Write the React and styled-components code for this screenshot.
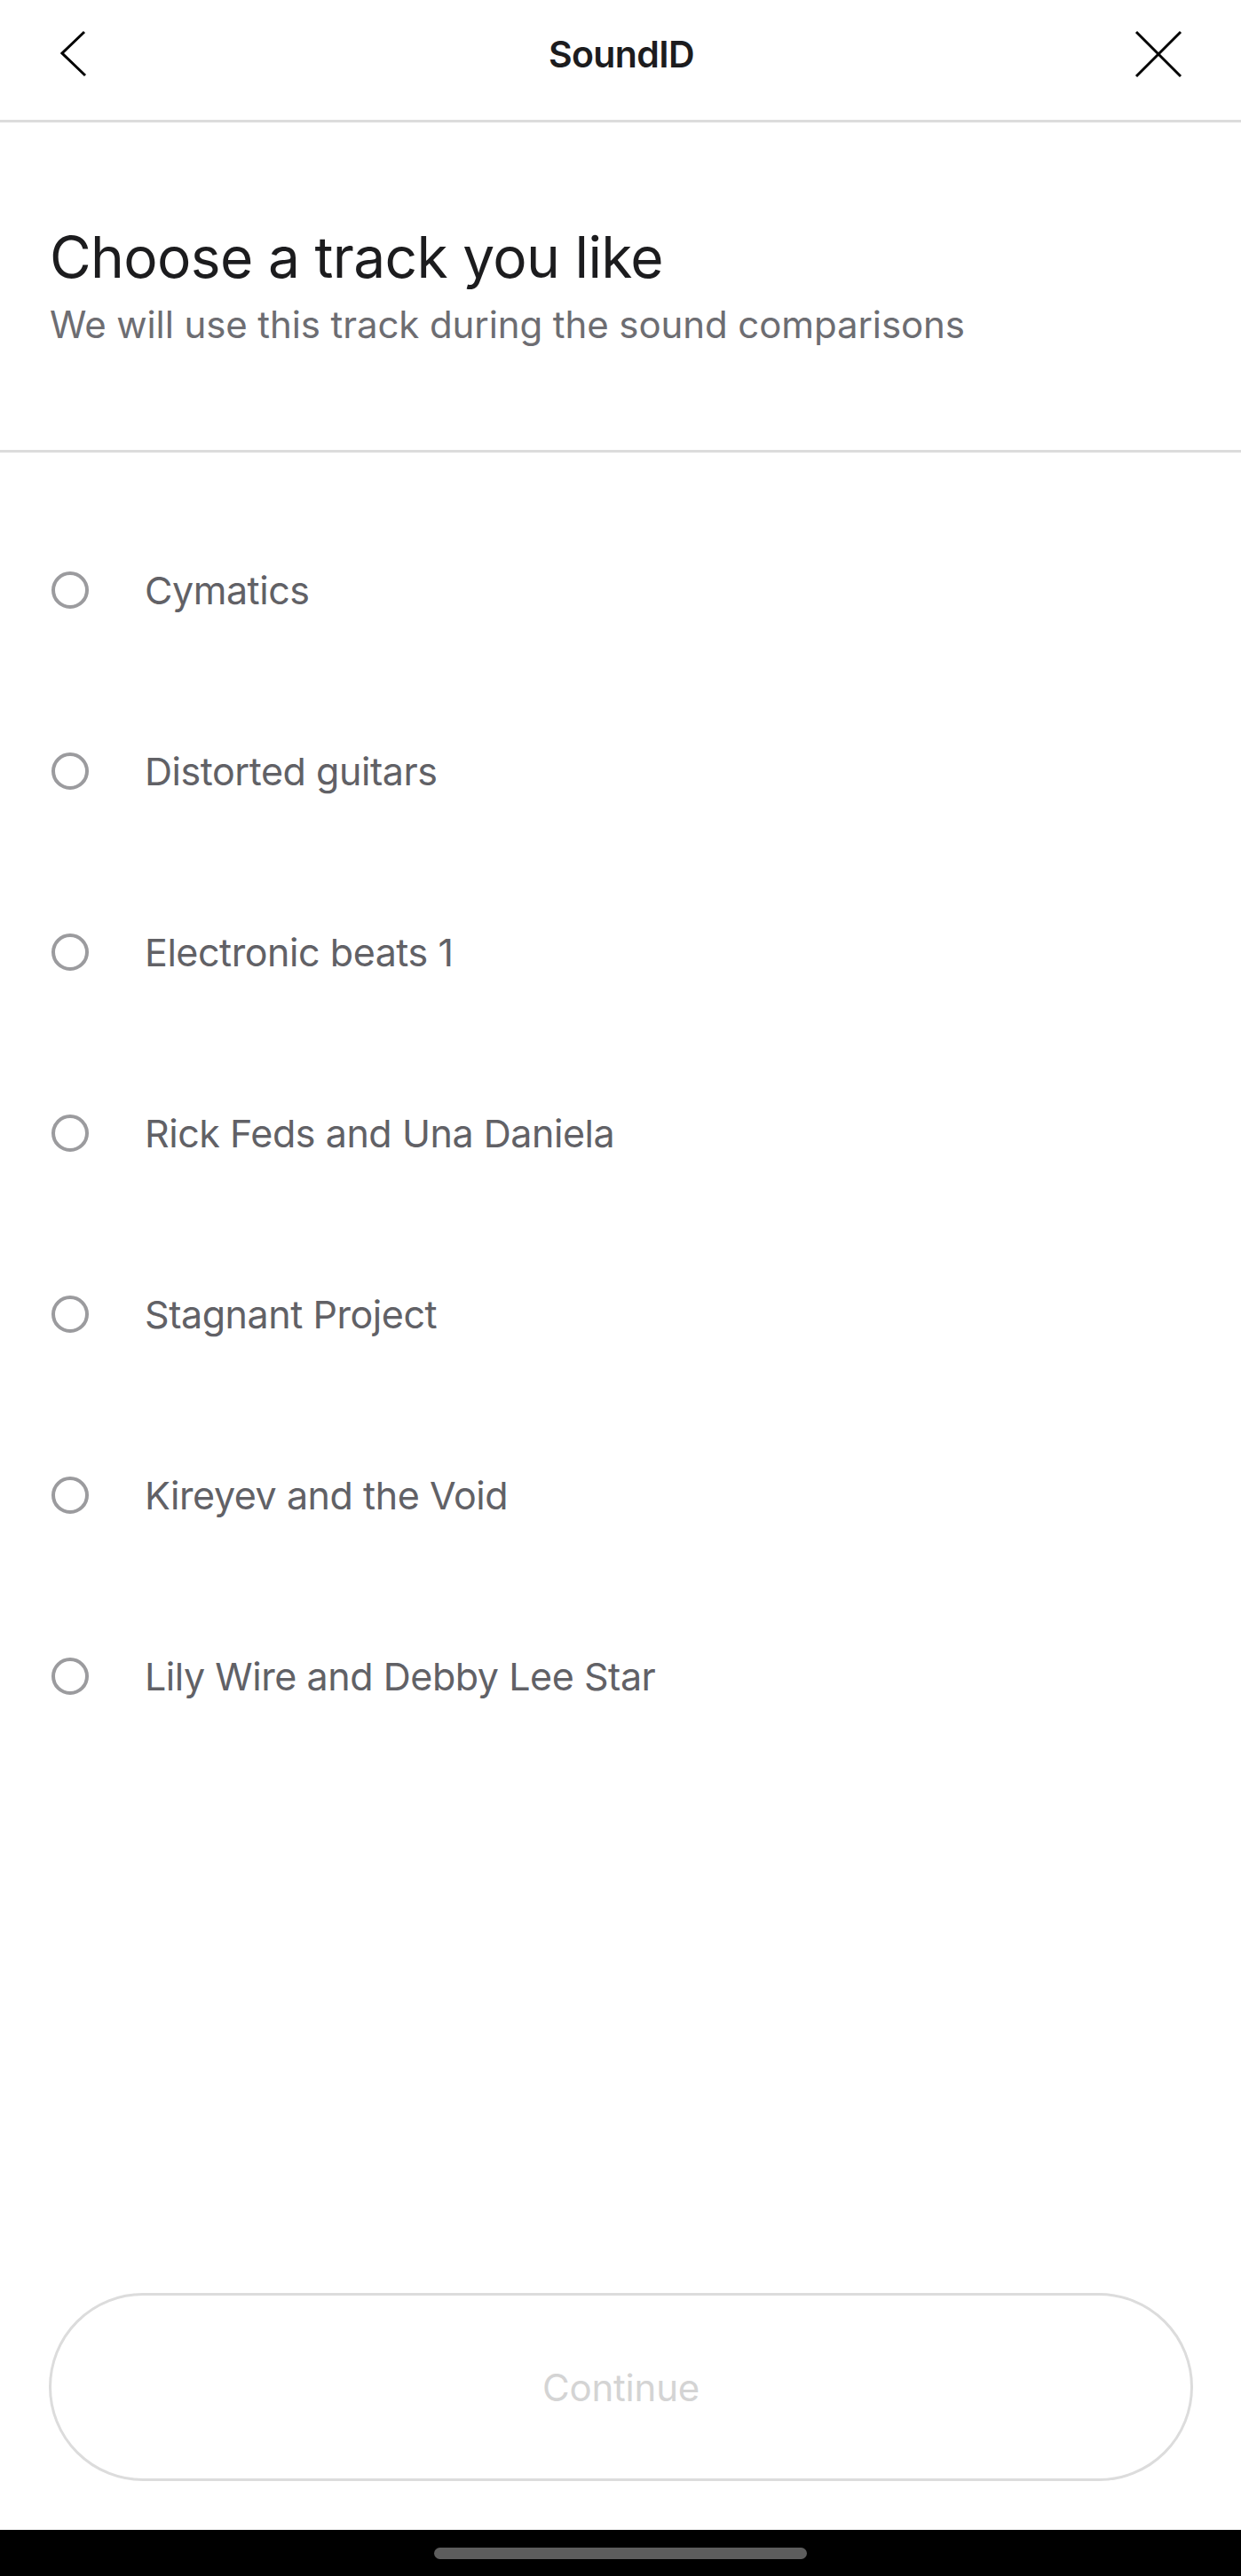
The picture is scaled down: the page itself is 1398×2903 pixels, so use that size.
import React, { useState } from 'react';
import styled, { createGlobalStyle } from 'styled-components';

const GlobalStyles = createGlobalStyle`
  html, body {
    margin: 0;
    padding: 0;
    background: #ffffff;
  }
  body {
    font-family: Inter, "Noto Sans", "Liberation Sans", sans-serif;
    -webkit-font-smoothing: antialiased;
  }
  * {
    box-sizing: border-box;
  }
`;

const Screen = styled.div`
  display: flex;
  flex-direction: column;
  width: 100%;
  height: 100vh;
  background: #ffffff;
`;

const TopBar = styled.header`
  display: flex;
  align-items: center;
  justify-content: space-between;
  height: 138px;
  padding: 0 66px 13px 68px;
  border-bottom: 3px solid #dcdcdc;
`;

const IconButton = styled.button`
  display: flex;
  align-items: center;
  justify-content: ${props => (props.align === 'left' ? 'flex-start' : 'flex-end')};
  width: 54px;
  height: 54px;
  padding: 0;
  border: none;
  background: none;
  cursor: pointer;
`;

const BarTitle = styled.div`
  font-size: 41px;
  font-weight: 600;
  letter-spacing: -0.6px;
  color: #1c1c1e;
`;

const Intro = styled.section`
  padding: 113px 56px 116px;
  border-bottom: 3px solid #dcdcdc;
`;

const Heading = styled.h1`
  margin: 0;
  font-size: 64px;
  line-height: 77px;
  font-weight: 400;
  letter-spacing: -0.65px;
  color: #1c1c1e;
`;

const Subheading = styled.p`
  margin: 13px 0 0;
  font-size: 42px;
  line-height: 50px;
  font-weight: 400;
  letter-spacing: -0.1px;
  color: #6d6d72;
`;

const TrackList = styled.ul`
  list-style: none;
  margin: 0;
  padding: 53px 0 0;
`;

const TrackRow = styled.li`
  display: flex;
  align-items: center;
  gap: 63px;
  height: 204px;
  padding-left: 58px;
  cursor: pointer;
`;

const Radio = styled.span`
  flex: none;
  width: 42px;
  height: 42px;
  border-radius: 50%;
  border: 4px solid ${props => (props.checked ? '#1c1c1e' : '#9b9b9e')};
  background: ${props => (props.checked ? 'radial-gradient(circle, #1c1c1e 45%, transparent 48%)' : 'transparent')};
`;

const TrackName = styled.span`
  font-size: 43px;
  font-weight: 400;
  letter-spacing: -0.45px;
  color: #616166;
`;

const Spacer = styled.div`
  flex: 1;
`;

const ContinueButton = styled.button`
  display: flex;
  align-items: center;
  justify-content: center;
  height: 212px;
  margin: 0 54px 55px 55px;
  border: 3px solid #dcdcdc;
  border-radius: 106px;
  background: #ffffff;
  font-family: inherit;
  font-size: 42px;
  font-weight: 400;
  letter-spacing: -0.2px;
  color: ${props => (props.disabled ? '#d4d4d4' : '#1c1c1e')};
`;

const NavBar = styled.div`
  display: flex;
  justify-content: center;
  height: 52px;
  padding-top: 20px;
  background: #000000;
`;

const HomeIndicator = styled.div`
  width: 420px;
  height: 13px;
  border-radius: 7px;
  background: #5d5d5d;
`;

const tracks = [
  'Cymatics',
  'Distorted guitars',
  'Electronic beats 1',
  'Rick Feds and Una Daniela',
  'Stagnant Project',
  'Kireyev and the Void',
  'Lily Wire and Debby Lee Star',
];

const App = () => {
  const [selected, setSelected] = useState(null);

  return (
    <>
      <GlobalStyles />
      <Screen>
        <TopBar>
          <IconButton align="left" aria-label="Back">
            <svg width="30" height="54" viewBox="0 0 30 54" fill="none">
              <polyline points="27,2 2,26 28,51" stroke="#000" strokeWidth="3" />
            </svg>
          </IconButton>
          <BarTitle>SoundID</BarTitle>
          <IconButton align="right" aria-label="Close">
            <svg width="54" height="54" viewBox="0 0 54 54" fill="none">
              <line x1="2" y1="2" x2="52" y2="52" stroke="#000" strokeWidth="3" />
              <line x1="52" y1="2" x2="2" y2="52" stroke="#000" strokeWidth="3" />
            </svg>
          </IconButton>
        </TopBar>

        <Intro>
          <Heading>Choose a track you like</Heading>
          <Subheading>We will use this track during the sound comparisons</Subheading>
        </Intro>

        <TrackList>
          {tracks.map((track, index) => (
            <TrackRow key={index} onClick={() => setSelected(index)}>
              <Radio checked={selected === index} />
              <TrackName>{track}</TrackName>
            </TrackRow>
          ))}
        </TrackList>

        <Spacer />

        <ContinueButton disabled={selected === null}>Continue</ContinueButton>

        <NavBar>
          <HomeIndicator />
        </NavBar>
      </Screen>
    </>
  );
}

export default App;
